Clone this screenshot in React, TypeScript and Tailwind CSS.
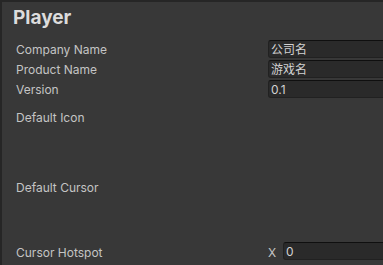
import React from 'react';

const font = { fontFamily: 'Inter, "Noto Sans CJK SC", sans-serif' };

function TextField({ value }: { value: string }) {
  return (
    <div className="h-[18px] w-[140px] shrink-0 rounded-[3px] border border-[#212121] border-t-[#0f0f0f] bg-[#2a2a2a] pl-[2px] pt-[1px] text-[12px] leading-[15px] text-[#d2d2d2]">
      {value}
    </div>
  );
}

function Row({ label, value }: { label: string; value: string }) {
  return (
    <div className="mb-[2px] flex h-[18px] items-start">
      <div className="w-[252px] shrink-0 pt-[3px] text-[12px] leading-[14px] text-[#c4c4c4]">{label}</div>
      <TextField value={value} />
    </div>
  );
}

export default function App() {
  return (
    <div
      style={font}
      className="h-[265px] w-[383px] overflow-hidden border-t-2 border-l-2 border-[#262626] bg-[#383838]"
    >
      <div className="flex h-[38px] items-start pl-[11px] pt-[4px]">
        <h1 className="text-[19px] font-bold leading-[24px] text-[#dcdcdc]">Player</h1>
      </div>

      <div className="pl-[14px]">
        <Row label="Company Name" value="公司名" />
        <Row label="Product Name" value="游戏名" />
        <Row label="Version" value="0.1" />

        <div className="mt-[13px] h-[70px] text-[12px] leading-[14px] text-[#c4c4c4]">Default Icon</div>
        <div className="h-[61px] text-[12px] leading-[14px] text-[#c4c4c4]">Default Cursor</div>

        <div className="flex h-[18px] items-start">
          <div className="w-[252px] shrink-0 pt-[4px] text-[12px] leading-[14px] text-[#c4c4c4]">Cursor Hotspot</div>
          <div className="w-[15px] shrink-0 pt-[4px] text-[12px] leading-[14px] text-[#c4c4c4]">X</div>
          <TextField value="0" />
        </div>
      </div>
    </div>
  );
}
